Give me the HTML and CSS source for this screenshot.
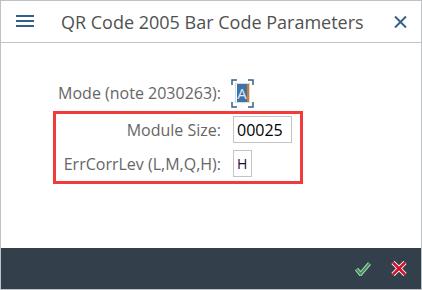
FILE: index.html
```html
<!DOCTYPE html>
<html>
<head>
<meta charset="utf-8">
<link rel="stylesheet" href="styles.css">
</head>
<body>
<div class="dialog">
  <div class="header">
    <svg class="menu" width="18" height="14" viewBox="0 0 18 14"><rect x="0" y="0" width="18" height="2" fill="#346187"/><rect x="0" y="5" width="18" height="2" fill="#346187"/><rect x="0" y="10" width="18" height="2" fill="#346187"/></svg>
    <div class="title">QR Code 2005 Bar Code Parameters</div>
    <svg class="close" width="13" height="12" viewBox="0 0 13 12"><path d="M1 0.5 L12 11.5 M12 0.5 L1 11.5" stroke="#346187" stroke-width="2" fill="none"/></svg>
  </div>
  <div class="content">
    <div class="row mode-row">
      <div class="label">Mode (note 2030263):</div>
      <div class="focus">
        <svg class="brackets" width="23" height="29" viewBox="0 0 23 29"><path d="M1 6 V1 H6 M17 1 H22 V6 M22 23 V28 H17 M6 28 H1 V23" stroke="#346187" stroke-width="1.5" fill="none"/></svg>
        <div class="sel"><span class="selA">A</span><span class="caret"></span></div>
      </div>
    </div>
    <div class="group">
      <div class="row">
        <div class="label">Module Size:</div>
        <div class="input wide">00025</div>
      </div>
      <div class="row">
        <div class="label">ErrCorrLev (L,M,Q,H):</div>
        <div class="input narrow">H</div>
      </div>
    </div>
  </div>
  <div class="footer">
    <svg class="ok" width="16" height="14" viewBox="0 0 16 14"><path d="M1.5 7 L5.5 12 L14.5 1.5" stroke="#b8d8f0" stroke-width="4" fill="none"/><path d="M1.5 7 L5.5 12 L14.5 1.5" stroke="#3f9a3a" stroke-width="2.2" fill="none"/></svg>
    <svg class="cancel" width="16" height="15" viewBox="0 0 16 15"><path d="M2 1.5 L14 13.5 M14 1.5 L2 13.5" stroke="#ffffff" stroke-width="4.5" fill="none"/><path d="M2 1.5 L14 13.5 M14 1.5 L2 13.5" stroke="#d6112a" stroke-width="2.6" fill="none"/></svg>
  </div>
</div>
</body>
</html>
```
FILE: styles.css
```css
html, body { margin: 0; padding: 0; background: #ffffff; }
body { font-family: "Open Sans", "Noto Sans", sans-serif; }
.dialog {
  width: 422px; height: 290px; box-sizing: border-box;
  border: 1px solid #bfc2c5;
  display: flex; flex-direction: column; background: #fff;
}
.header {
  height: 41px; flex: none;
  border-bottom: 1px solid #c2c5c8;
  display: flex; align-items: center;
  padding: 0 14px 0 15px;
}
.menu { flex: none; margin-top: 1px; }
.title {
  flex: 1; margin-left: 27px;
  font-size: 18px; color: #515151; letter-spacing: 0;
}
.close { flex: none; margin-top: 1px; }
.content { flex: 1; padding: 35px 0 0 52px; }
.row { display: flex; align-items: center; height: 29px; }
.mode-row { height: 30px; padding-left: 3px; margin-bottom: 3px; }
.label {
  width: 165px; text-align: right;
  font-size: 16px; color: #666666;
  margin-right: 12px; white-space: nowrap;
}
.mode-row .label { margin-right: 10px; }
.group {
  width: 244px; border: 3px solid #f23a3a;
  padding: 1px 0 3px; display: flex; flex-direction: column; gap: 5px;
}
.input {
  height: 27px; box-sizing: border-box; border: 1px solid #c4c4c4;
  font-size: 16px; color: #000; display: flex; align-items: center;
  padding-left: 3px;
}
.wide { width: 59px; }
.narrow { width: 19px; height: 27px; padding-left: 3px; font-size: 14px; color: #1a0a3a; }
.focus { position: relative; width: 23px; height: 29px; }
.brackets { position: absolute; left: 0; top: 0; }
.sel {
  position: absolute; left: 4px; top: 4px; width: 15px; height: 20px;
  border: 1px solid #d0dbe6; box-sizing: border-box; display: flex;
}
.selA {
  background: #3f73a8; color: #dfe9f3; font-size: 15px; line-height: 18px;
  width: 11px; text-align: center; margin-left: 1px;
}
.caret { width: 2px; background: #d07a2a; height: 18px; }
.footer {
  height: 41px; flex: none; background: #343f4c;
  display: flex; align-items: center; justify-content: flex-end;
  padding-right: 14px; gap: 20px;
}
```
